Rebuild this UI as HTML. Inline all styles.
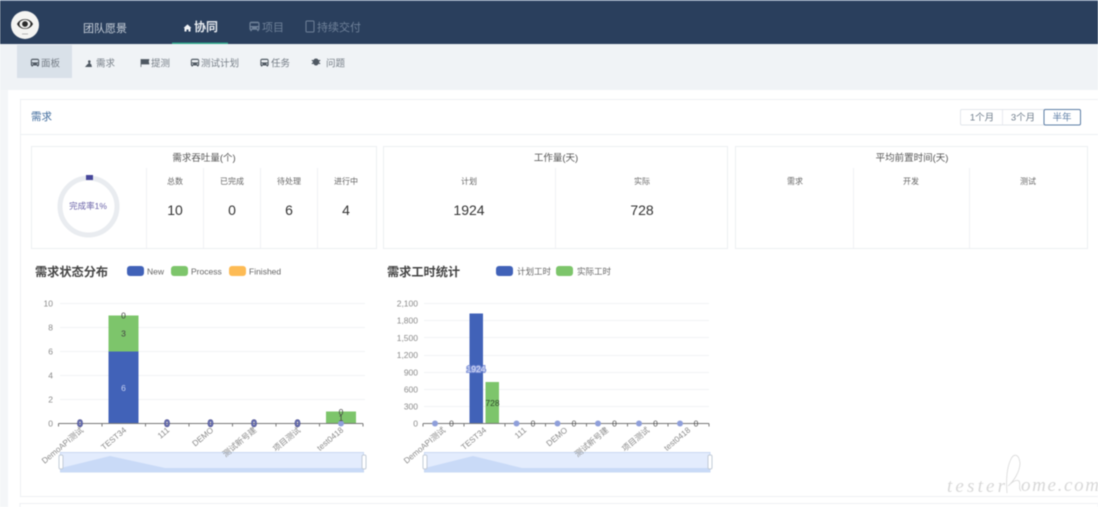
<!DOCTYPE html>
<html><head><meta charset="utf-8">
<style>
html,body{margin:0;padding:0;background:#fff}
#p{position:relative;width:1098px;height:507px;overflow:hidden;background:#f4f6f8;filter:blur(.45px)}
svg{position:absolute;left:0;top:0}
text{font-family:"Liberation Sans","Noto Sans CJK SC",sans-serif}
</style></head>
<body><div id="p">
<svg width="1098" height="507" viewBox="0 0 1098 507">
<defs>
<symbol id="bus" viewBox="0 0 10 10"><path fill="currentColor" fill-rule="evenodd" d="M2.200.6h5.600C8.900.6 9.600 1.300 9.600 2.400V8H8.900v1.200H7.400V8H2.600v1.200H1.100V8H.4V2.400C.4 1.300 1.100.6 2.200.6zM1.500 2v2.600h7V2zM2.200 5.700a.7.7 0 100 1.400.7.7 0 000-1.400zM7.800 5.700a.7.7 0 100 1.400.7.7 0 000-1.400z"/></symbol>
</defs>
<!-- header -->
<rect width="1098" height="44" fill="#2a3f5d"/>
<rect width="1098" height="1" fill="#7f93ad"/>
<circle cx="25" cy="25" r="14" fill="#f4f4f2"/>
<path d="M17 24C20 17.500 30 17.500 33 24C30 30.500 20 30.500 17 24Z" fill="#2b2b2b"/>
<ellipse cx="25" cy="24" rx="5.500" ry="4.300" fill="#f4f4f2"/><circle cx="25" cy="24" r="2.900" fill="#2b2b2b"/>
<rect x="22" y="33.500" width="6" height="1" fill="#b5b5b5"/>
<text x="83" y="32" font-size="11" fill="#c8d0da">团队愿景</text>
<path d="M183.500 28l4-3.600 4 3.600h-1v3.500h-2v-2h-2v2h-2V28z" fill="#f2f4f7"/>
<text x="194" y="31" font-size="12" font-weight="bold" fill="#e6eaef">协同</text>
<rect x="172" y="42.500" width="56" height="2" fill="#2fa58a"/>
<use href="#bus" x="249" y="21" width="11" height="11" color="#6f8199"/>
<text x="262" y="31" font-size="11" fill="#6f8199">项目</text>
<rect x="306" y="21" width="8" height="11" rx="1" fill="none" stroke="#6f8199" stroke-width="1"/>
<text x="317" y="31" font-size="11" fill="#6f8199">持续交付</text>
<!-- sub nav -->
<rect y="44" width="1098" height="46" fill="#f0f3f6"/>
<rect x="17" y="45" width="55" height="33" fill="#d9e1e9"/>
<g font-size="9.500" fill="#767e87">
<use href="#bus" x="30.500" y="58" width="9" height="9.500" color="#4f5862"/><text x="41" y="66.500">面板</text>
<path d="M85 67h7l-.8-2.800-1.200-.8.6-1.800a1.300 1.300 0 10-2.600 0l.6 1.800-1.200.8z" fill="#4f5862"/><text x="96" y="66.500">需求</text>
<path d="M141 59v8M141.500 59.500h7.500l-.6 2 .6 2.500h-7.500z" fill="#4f5862" stroke="#4f5862" stroke-width=".7"/><text x="151" y="66.500">提测</text>
<use href="#bus" x="190.500" y="58" width="9" height="9.500" color="#4f5862"/><text x="201" y="66.500">测试计划</text>
<use href="#bus" x="260" y="58" width="9" height="9.500" color="#4f5862"/><text x="271" y="66.500">任务</text>
<path d="M316 58.500c1.300 0 2.300.8 2.600 1.800l1.400-.5.400 1-1.300.7v1l1.300.8-.5.9-1.300-.6c-.5 1-1.500 1.900-2.600 1.900s-2.100-.9-2.600-1.900l-1.300.6-.5-.9 1.300-.8v-1l-1.300-.7.400-1 1.400.5c.3-1 1.300-1.800 2.600-1.800z" fill="#4f5862"/><text x="326" y="66.500">问题</text>
</g>
<!-- main panel -->
<rect x="8" y="90" width="1090" height="417" fill="#fff"/>
<rect x="20.500" y="99.500" width="1080" height="397" fill="#fff" stroke="#eef0f3"/>
<rect x="20" y="503.500" width="1078" height="4" fill="#fff" stroke="#eef0f3"/>
<line x1="20" y1="134.500" x2="1098" y2="134.500" stroke="#edf0f3"/>
<text x="31" y="120" font-size="10.500" fill="#3e6a9c">需求</text>
<!-- range buttons -->
<rect x="960.500" y="109.500" width="120" height="15.500" rx="1.500" fill="#fff" stroke="#e3e7ec"/>
<line x1="1002.500" y1="110" x2="1002.500" y2="125" stroke="#e8ebef"/>
<rect x="1044" y="109.500" width="36.500" height="15.500" rx="1.500" fill="#fff" stroke="#5d7ea6"/>
<g font-size="9.500" text-anchor="middle">
<text x="982" y="120.500" fill="#6f7d8c">1个月</text>
<text x="1023" y="120.500" fill="#6f7d8c">3个月</text>
<text x="1062" y="120.500" fill="#5d7ea6">半年</text>
</g>
<!-- stat cards -->
<g fill="#fff" stroke="#edeff2">
<rect x="31.500" y="146.500" width="345" height="102"/>
<rect x="383.500" y="146.500" width="344" height="102"/>
<rect x="735.500" y="146.500" width="352" height="102"/>
</g>
<g stroke="#eff1f4">
<path d="M146.500 168V248M203.500 168V248M260.500 168V248M317.500 168V248M555.500 168V248M853.500 168V248M969.500 168V248"/>
</g>
<g font-size="9.500" fill="#555" text-anchor="middle">
<text x="204" y="161">需求吞吐量(个)</text>
<text x="556" y="161">工作量(天)</text>
<text x="912" y="161">平均前置时间(天)</text>
</g>
<g font-size="8" fill="#666" text-anchor="middle">
<text x="175" y="184">总数</text><text x="232" y="184">已完成</text><text x="289" y="184">待处理</text><text x="346" y="184">进行中</text>
<text x="469" y="184">计划</text><text x="642" y="184">实际</text>
<text x="795" y="184">需求</text><text x="911" y="184">开发</text><text x="1028" y="184">测试</text>
</g>
<g font-size="14" fill="#333" text-anchor="middle">
<text x="175" y="215">10</text><text x="232" y="215">0</text><text x="289" y="215">6</text><text x="346" y="215">4</text>
<text x="469" y="215">1924</text><text x="642" y="215">728</text>
</g>
<circle cx="88.500" cy="206.500" r="28.500" fill="none" stroke="#e9ecf0" stroke-width="5"/>
<rect x="86" y="175" width="7" height="5" fill="#46469a"/>
<text x="88" y="209" font-size="8.500" fill="#6a63a8" text-anchor="middle">完成率1%</text>

<!-- chart 1 legend -->
<text x="35" y="276" font-size="12.200" font-weight="bold" fill="#444">需求状态分布</text>
<rect x="127" y="266" width="17" height="10" rx="3" fill="#4162b8"/>
<text x="147" y="274.500" font-size="8.500" fill="#666">New</text>
<rect x="171" y="266" width="17" height="10" rx="3" fill="#7dc56b"/>
<text x="191" y="274.500" font-size="8.500" fill="#666">Process</text>
<rect x="229" y="266" width="17" height="10" rx="3" fill="#fdbb55"/>
<text x="249" y="274.500" font-size="8.500" fill="#666">Finished</text>
<!-- chart 1 grid -->
<g stroke="#f1f3f5"><path d="M60 303.500H365M60 327.500H365M60 351.500H365M60 375.500H365M60 399.500H365"/></g>
<g font-size="8.500" fill="#8a8a8a" text-anchor="end">
<text x="53" y="306.500">10</text><text x="53" y="330.500">8</text><text x="53" y="354.500">6</text><text x="53" y="378.500">4</text><text x="53" y="402.500">2</text><text x="53" y="426.500">0</text>
</g>
<rect x="108.500" y="351.500" width="30" height="72" fill="#4162b8"/>
<rect x="108.500" y="315.500" width="30" height="36" fill="#7dc56b"/>
<rect x="326" y="411.500" width="30" height="12" fill="#7dc56b"/>
<path d="M58.500 423.500H363M58.500 423.500v3M102 423.500v3M145.500 423.500v3M189 423.500v3M232.500 423.500v3M276 423.500v3M319.500 423.500v3M363 423.500v3" stroke="#777" fill="none"/>
<g fill="#8f9fda"><circle cx="341" cy="423.500" r="3"/></g>
<g font-size="9" text-anchor="middle" fill="#8f9fda" stroke="#2f2f7a" stroke-width="1.300" paint-order="stroke">
<text x="80" y="426.500">0</text><text x="167" y="426.500">0</text><text x="210.500" y="426.500">0</text><text x="254" y="426.500">0</text><text x="297.500" y="426.500">0</text>
</g>
<g font-size="8.500" text-anchor="middle" fill="#444">
<text x="123.500" y="318.500">0</text><text x="123.500" y="336.500">3</text><text x="341" y="415">0</text><text x="341" y="421">1</text>
</g>
<text x="123.500" y="391" font-size="8.500" text-anchor="middle" fill="#c8d2f2">6</text>
<!-- dz1 -->
<rect x="60.500" y="452.500" width="303" height="19.500" fill="#e3ecfd" stroke="#c8d8f2"/>
<path d="M61 468L110 456L165 468V472H61Z M165 468H363V472H165Z" fill="#c9daf7"/>
<rect x="59" y="455" width="4" height="14" rx="1.500" fill="#fff" stroke="#c2cbd8"/>
<rect x="362" y="455" width="4" height="14" rx="1.500" fill="#fff" stroke="#c2cbd8"/>
<g font-size="8.200" fill="#8a8a8a" text-anchor="end">
<text transform="translate(84 431) rotate(-40)">DemoAPI测试</text>
<text transform="translate(127 431) rotate(-40)">TEST34</text>
<text transform="translate(170 431) rotate(-40)">111</text>
<text transform="translate(214 431) rotate(-40)">DEMO</text>
<text transform="translate(257 431) rotate(-40)">测试新号建</text>
<text transform="translate(301 431) rotate(-40)">项目测试</text>
<text transform="translate(344 431) rotate(-40)">test0418</text>
</g>

<!-- chart 2 legend -->
<text x="387" y="276" font-size="12.200" font-weight="bold" fill="#444">需求工时统计</text>
<rect x="496" y="266" width="17" height="10" rx="3" fill="#4162b8"/>
<text x="517" y="274.500" font-size="8.500" fill="#666">计划工时</text>
<rect x="556" y="266" width="17" height="10" rx="3" fill="#7dc56b"/>
<text x="577" y="274.500" font-size="8.500" fill="#666">实际工时</text>
<g stroke="#f1f3f5"><path d="M424 303.500H709M424 320.500H709M424 337.500H709M424 355.500H709M424 372.500H709M424 389.500H709M424 406.500H709"/></g>
<g font-size="8.500" fill="#8a8a8a" text-anchor="end">
<text x="418" y="306.500">2,100</text><text x="418" y="323.500">1,800</text><text x="418" y="341">1,500</text><text x="418" y="358">1,200</text><text x="418" y="375.500">900</text><text x="418" y="392.500">600</text><text x="418" y="409.500">300</text><text x="418" y="426.500">0</text>
</g>
<rect x="469.500" y="313.500" width="13.500" height="110" fill="#4162b8"/>
<rect x="485.500" y="382" width="13.500" height="41.500" fill="#7dc56b"/>
<path d="M423 423.500H709M423 423.500v3M464 423.500v3M505 423.500v3M545.500 423.500v3M586.500 423.500v3M627.500 423.500v3M668 423.500v3M709 423.500v3" stroke="#777" fill="none"/>
<g fill="#8f9fda"><circle cx="435" cy="423.500" r="3"/><circle cx="516.500" cy="423.500" r="3"/><circle cx="557.500" cy="423.500" r="3"/><circle cx="598" cy="423.500" r="3"/><circle cx="639" cy="423.500" r="3"/><circle cx="680" cy="423.500" r="3"/></g>
<g font-size="8.500" text-anchor="middle" fill="#555">
<text x="451.500" y="426.500">0</text><text x="533" y="426.500">0</text><text x="574" y="426.500">0</text><text x="614.500" y="426.500">0</text><text x="655.500" y="426.500">0</text><text x="696" y="426.500">0</text>
</g>
<text x="476" y="372" font-size="8.500" text-anchor="middle" fill="#dfe5fa" stroke="#7d90d6" stroke-width="2" paint-order="stroke">1924</text>
<text x="492.500" y="406" font-size="8.500" text-anchor="middle" fill="#2f4a2a">728</text>
<rect x="424.500" y="452.500" width="285.500" height="19.500" fill="#e3ecfd" stroke="#c8d8f2"/>
<path d="M425 468L473 456L522 468V472H425Z M522 468H710V472H522Z" fill="#c9daf7"/>
<rect x="423" y="455" width="4" height="14" rx="1.500" fill="#fff" stroke="#c2cbd8"/>
<rect x="708" y="455" width="4" height="14" rx="1.500" fill="#fff" stroke="#c2cbd8"/>
<g font-size="8.200" fill="#8a8a8a" text-anchor="end">
<text transform="translate(446 431) rotate(-40)">DemoAPI测试</text>
<text transform="translate(487 431) rotate(-40)">TEST34</text>
<text transform="translate(527 431) rotate(-40)">111</text>
<text transform="translate(568 431) rotate(-40)">DEMO</text>
<text transform="translate(609 431) rotate(-40)">测试新号建</text>
<text transform="translate(650 431) rotate(-40)">项目测试</text>
<text transform="translate(691 431) rotate(-40)">test0418</text>
</g>

<!-- watermark -->
<g fill="#d8d8d8" font-size="19" style="font-style:italic">
<text x="947" y="492" textLength="58" lengthAdjust="spacing" style="font-family:'Liberation Serif',serif">tester</text>
<text x="1021" y="491" textLength="78" lengthAdjust="spacing" style="font-family:'Liberation Serif',serif">ome.com</text>
</g>
<path d="M1007 493C1006 480 1007 467 1011 459C1014 453 1019 454 1020 463C1020 472 1013 482 1008 486C1012 482 1016 479 1019 481C1021 484 1018 489 1021 491" fill="none" stroke="#d8d8d8" stroke-width=".8"/>
</svg>
</div></body></html>
